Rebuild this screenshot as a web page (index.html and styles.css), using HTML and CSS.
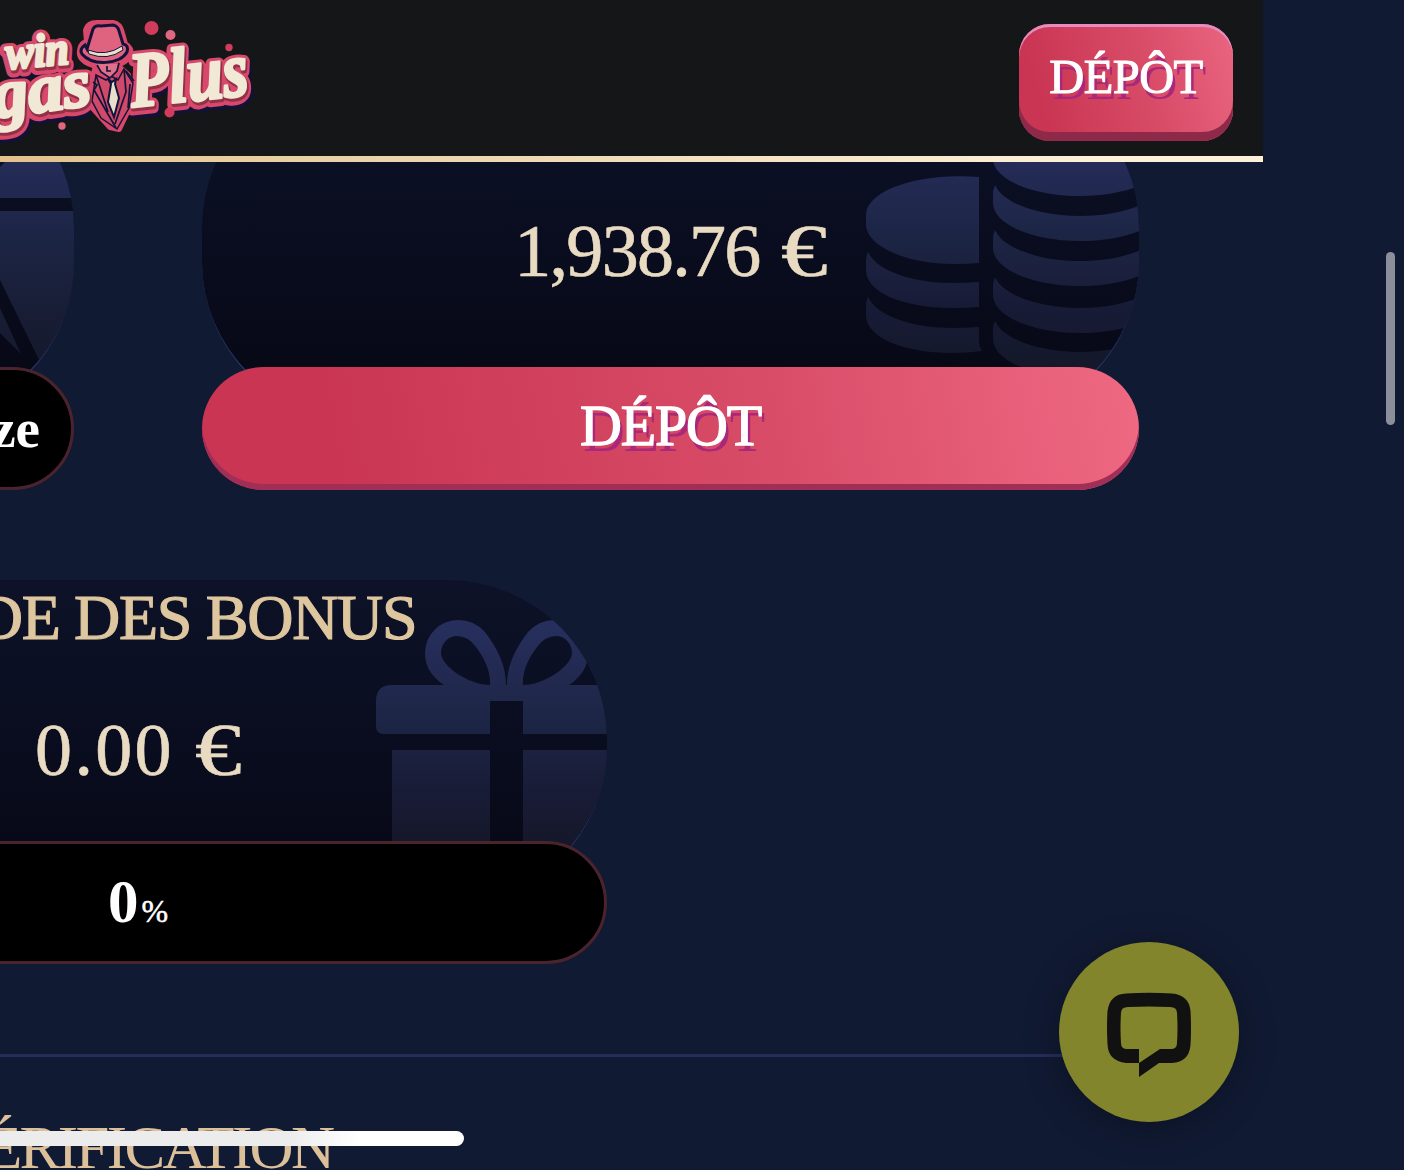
FILE: index.html
```html
<!DOCTYPE html>
<html lang="fr">
<head>
<meta charset="utf-8">
<title>Vegas Plus</title>
<link rel="stylesheet" href="styles.css">
</head>
<body>
<div class="app">
  <header class="header">
    <svg class="logo" viewBox="-70 0 330 156" role="img" aria-label="win Vegas Plus">
      <defs>
        <g id="words">
          <text x="7" y="69" font-size="46" textLength="63" lengthAdjust="spacingAndGlyphs" transform="rotate(-5 6 68)">win</text>
          <text x="-75" y="128" font-size="68" textLength="169" lengthAdjust="spacingAndGlyphs" transform="rotate(-8 -75 124)">Vegas</text>
          <text x="132" y="107" font-size="78" textLength="119" lengthAdjust="spacingAndGlyphs" transform="rotate(-6 132 108)">Plus</text>
        </g>
      </defs>
      <use href="#words" class="logo-depth" transform="translate(2 5)"/>
      <use href="#words" class="logo-outline" transform="translate(0 2)"/>
      <path class="logo-halo" d="M86 30Q88 23 97 23L113 23Q120 24 122 33L125 44Q132 48 130 55Q126 62 119 64L119 67L128 75L130 85L128 110L119 129L110 127L92 107L92 80L96 66Q78 61 80 50Q81 43 87 42Z"/>
      <path class="suit" d="M96 75L106 80L111 76L118 80L124 69L133 83L129 108L117 129L101 118L92 101Z"/>
      <path class="face" d="M96 64H119L117 71L110 78L101 72Z"/>
      <path class="lines" d="M97 65L101 72L110 78L117 71L119 63M107 66V71H111M96 75L108 112M93 82L97 85L94 90L116 128M124 69L126 92L115 124M126 71L134 81M130 84L128 108"/>
      <path class="hat" d="M87 49L93 29Q95 25 101 26L113 25Q118 26 119 31L123 44Q129 45 127 52C120 65 92 66 82 54Q79 49 85 45Z"/>
      <path class="hat-band" d="M88 50Q106 57 122 46L123 50Q108 61 89 54Z"/>
      <path class="tie" d="M108 79L112 82L116 79L115 84L119 98L114 117L108 102L111 84Z"/>
      <use href="#words" class="logo-edge" transform="translate(1 2)"/>
      <use href="#words" class="logo-fill"/>
      <g class="dots"><circle cx="151.500" cy="28" r="7"/><circle cx="229" cy="47.500" r="3.700"/><circle cx="169.500" cy="112.500" r="5"/></g>
      <g class="dots dots-light"><circle cx="170.500" cy="35" r="5"/><circle cx="62" cy="126" r="3.700"/></g>
    </svg>
    <button class="header-deposit">DÉPÔT</button>
  </header>

  <main class="main">
    <div class="cards">
      <section class="card">
        <div class="panel panel-tall">
          <svg class="art art-gem" viewBox="0 162 74 258" aria-hidden="true">
            <defs><linearGradient id="gemFill" gradientUnits="userSpaceOnUse" x1="0" y1="162" x2="0" y2="370"><stop stop-color="#242c58"/><stop offset=".4" stop-color="#1c2443"/><stop offset="1" stop-color="#15182a"/></linearGradient></defs>
            <path fill="url(#gemFill)" d="M0 167L5 162H80V198H0ZM0 211H80V380H49L0 280ZM0 308L21 354L0 333Z"/>
          </svg>
        </div>
        <div class="pill pill-level">Bronze</div>
      </section>
      <section class="card">
        <div class="panel panel-tall">
          <svg class="art art-coins" viewBox="866 162 273 258" aria-hidden="true">
            <defs>
              <linearGradient id="coinFill" gradientUnits="userSpaceOnUse" x1="0" y1="162" x2="0" y2="370"><stop stop-color="#242c58"/><stop offset=".4" stop-color="#1c2443"/><stop offset=".7" stop-color="#181b36"/><stop offset="1" stop-color="#141829"/></linearGradient>
              <path id="coin" d="M995 185C1003 203 1038 216 1080 216S1157 203 1165 185L1167 193V203C1167 224 1128 241 1080 241S993 224 993 203V195Q993 189 995 185Z"/>
              <clipPath id="stacks">
                <path d="M979 177C920 172 866 190 866 215V224C866 246 906 264 954 264Q967 264 979 263Z"/>
                <path d="M868 252C876 270 911 283 952 283Q966 283 979 282V307Q966 308 952 308C905 308 866 293 866 270V262Q866 256 868 252Z"/>
                <path d="M868 297C876 315 911 328 952 328Q966 328 979 327V342Q980 349 982 351Q966 353 952 353C905 353 866 338 866 315V307Q866 301 868 297Z"/>
                <path d="M993 150V160C995 180 1033 196 1080 196S1165 180 1167 160V150Z"/>
                <use href="#coin"/>
                <use href="#coin" transform="translate(0 45)"/>
                <use href="#coin" transform="translate(0 92)"/>
                <use href="#coin" transform="translate(0 136)"/>
              </clipPath>
            </defs>
            <rect x="860" y="150" width="310" height="260" fill="url(#coinFill)" clip-path="url(#stacks)"/>
          </svg>
          <div class="amount amount-tall">1,938.76 <span class="euro">€</span></div>
        </div>
        <button class="pill pill-deposit">DÉPÔT</button>
      </section>
    </div>

    <div class="cards">
      <section class="card">
        <div class="panel">
          <svg class="art art-gift" viewBox="376 580 231 326" aria-hidden="true">
            <defs><linearGradient id="giftFill" gradientUnits="userSpaceOnUse" x1="0" y1="620" x2="0" y2="845"><stop stop-color="#272f5e"/><stop offset=".5" stop-color="#1c2443"/><stop offset=".75" stop-color="#191c37"/><stop offset="1" stop-color="#151829"/></linearGradient></defs>
            <g fill="url(#giftFill)">
              <path fill-rule="evenodd" d="M376 701Q376 685 392 685H444C432 677 425 667 425 653A33 33 0 0 1 458 620Q474 620 485 632C498 649 506 666 506 685H507C507 666 515 649 528 632Q539 620 555 620A33 33 0 0 1 588 653C588 667 581 677 569 685H621Q637 685 637 701V728Q637 734 629 734H523V701H490V734H384Q376 734 376 726ZM490 685C491 670 483 656 476 647Q468 636 457 636A16 17 0 0 0 441 653C441 666 469 685 490 685ZM523 685C522 670 530 656 537 647Q545 636 556 636A16 17 0 0 1 572 653C572 666 544 685 523 685Z"/>
              <path d="M392 750H490V906H392ZM523 750H621V906H523Z"/>
            </g>
          </svg>
          <h2 class="card-title">SOLDE DES BONUS</h2>
          <div class="amount amount-wide">0.00 <span class="euro">€</span></div>
        </div>
        <div class="pill pill-progress"><span>0</span><small>%</small></div>
      </section>
    </div>

    <hr class="divider">
    <h2 class="section-title">VÉRIFICATION</h2>
  </main>
</div>

<button class="chat" aria-label="Chat">
  <svg viewBox="1059 942 180 180" aria-hidden="true"><path d="M1139 1077V1063L1160 1049H1171Q1177 1049 1177 1043Q1178 1028 1177 1013Q1177 1007 1170 1007Q1149 1006 1128 1007Q1121 1007 1121 1013Q1120 1028 1121 1043Q1121 1049 1127 1049H1139V1063H1126Q1108 1061 1107.500 1044Q1106.500 1028 1107.500 1011Q1110 994 1126 993.500Q1149 992 1172 993.500Q1189 995 1190.500 1011Q1191.500 1028 1190.500 1045Q1189 1062 1172 1063H1159Z"/></svg>
</button>
<div class="scrollbar"></div>
<div class="home-indicator"></div>
</body>
</html>
```
FILE: styles.css
```css
* { box-sizing: border-box; }

body {
  position: relative;
  margin: 0;
  width: 1404px;
  height: 1170px;
  overflow: hidden;
  background: #111a33;
  font-family: "Liberation Serif", serif;
}

button { border: 0; font-family: inherit; }
h2 { margin: 0; font-weight: 400; }

.app { width: 2250px; margin-left: -987px; }

.header {
  position: relative;
  z-index: 1;
  display: flex;
  justify-content: flex-end;
  align-items: flex-start;
  height: 162px;
  padding-right: 30px;
  background: #141618;
  border-bottom: 6px solid;
  border-image: linear-gradient(90deg, #e3c08c 43.900%, #e6cb9d 52%, #fdf0d8 92%) 1;
}

.logo { width: 330px; height: 156px; margin-right: 759px; }
.logo text { font-family: "Liberation Serif", serif; font-weight: 700; font-style: italic; }
.logo-depth { fill: #11113a; stroke: #11113a; stroke-width: 13px; stroke-linejoin: round; }
.logo-outline { fill: #d8486a; stroke: #d8486a; stroke-width: 13px; stroke-linejoin: round; }
.logo-edge { fill: #923047; stroke: #923047; stroke-width: 5px; stroke-linejoin: round; }
.logo-fill { fill: #f1e8d5; stroke: #f1e8d5; stroke-width: 3px; stroke-linejoin: round; }
.logo-halo { fill: #d8486a; stroke: #d8486a; stroke-width: 6px; stroke-linejoin: round; }
.suit { fill: #cf4968; stroke: #12133a; stroke-width: 1.500px; }
.face { fill: #df7089; }
.lines { fill: none; stroke: #12133a; stroke-width: 1.700px; }
.hat { fill: #df627e; stroke: #12133a; stroke-width: 3px; }
.hat-band { fill: #e7dfcb; stroke: #12133a; stroke-width: 1px; }
.tie { fill: #e7dfcb; stroke: #12133a; stroke-width: 2px; }
.dots { fill: #d13c5c; }
.dots-light { fill: #df6780; }

.header-deposit {
  width: 214px;
  height: 117px;
  margin-top: 24px;
  padding: 0 0 12px;
  border-radius: 31px;
  background: linear-gradient(75deg, #c93552 12%, #d94d69 62%, #ea6580);
  box-shadow: inset 0 3px #e58bbd, inset 0 -9px #8f294a;
  color: #fff;
  font-size: 48.500px;
  letter-spacing: -.6px;
  -webkit-text-stroke: 1px #fff;
  text-shadow: 3px 6px #a92879;
}

.main { margin: -94px 124px 0; }
.cards { display: flex; justify-content: center; gap: 128px; margin-bottom: 90px; }
.card { width: 937px; }

.panel {
  position: relative;
  height: 326px;
  overflow: hidden;
  border-bottom: 3px solid #27325f;
  border-radius: 160px;
  background: linear-gradient(#0d1228, #0a0d1f 50%, #070917 85%);
  text-align: center;
}
.panel-tall { height: 354px; }

.art { position: absolute; top: 0; right: 0; }
.art-gem { top: 94px; width: 74px; height: 258px; }
.art-coins { top: 94px; width: 273px; height: 258px; }
.art-gift { width: 231px; height: 326px; }

.card-title {
  position: relative;
  margin-bottom: 49px;
  color: #dec79f;
  font-size: 64px;
  line-height: 76px;
  letter-spacing: -1.300px;
  -webkit-text-stroke: 1.200px #dec79f;
}
.amount { color: #e9dbc2; font-size: 74px; line-height: 90px; -webkit-text-stroke: .6px #e9dbc2; }
.amount-tall { padding: 138px 10px 0 0; letter-spacing: -1.700px; }
.amount-wide { padding-right: 7px; letter-spacing: 2.300px; }
.euro { display: inline-block; transform: scaleX(1.26); transform-origin: left; }
.amount-tall .euro { margin-left: 5px; }

.pill {
  position: relative;
  display: flex;
  align-items: center;
  justify-content: center;
  width: 100%;
  height: 123px;
  margin-top: -65px;
  border-radius: 62px;
  color: #fff;
  font-size: 58px;
}
.panel-tall + .pill { margin-top: -55px; }
.pill-level, .pill-progress { border: 3px solid #4b232d; background: #000; }
.pill-level { justify-content: flex-end; padding-right: 31px; font-size: 55px; font-weight: 700; }
.pill-deposit {
  padding: 0 0 6px;
  background: linear-gradient(80deg, #c93552 14%, #d94d69 62%, #ef6983);
  box-shadow: inset 0 -6px #a02e56;
  letter-spacing: -1.200px;
  -webkit-text-stroke: 1.300px #fff;
  text-shadow: 3px 6px #a92879;
}
.pill-progress { align-items: baseline; gap: 3px; padding-top: 23px; }
.pill-progress span { font-weight: 700; font-size: 61px; }
.pill-progress small { font-size: 32px; -webkit-text-stroke: .5px #fff; }

.divider { height: 3px; margin: 0 0 52px; border: 0; background: #252e5b; }
.section-title {
  color: #dcc09a;
  font-size: 61px;
  line-height: 78px;
  letter-spacing: -2.600px;
  text-align: center;
}

.chat {
  position: absolute;
  z-index: 2;
  left: 1059px;
  top: 942px;
  width: 180px;
  height: 180px;
  padding: 0;
  border-radius: 50%;
  background: #82852c;
  box-shadow: 0 6px 36px rgba(0, 0, 0, .3);
}
.chat svg { display: block; fill: #111; }

.scrollbar {
  position: absolute;
  left: 1386px;
  top: 252px;
  width: 9px;
  height: 173px;
  border-radius: 5px;
  background: #8b8f9a;
}
.home-indicator {
  position: absolute;
  z-index: 3;
  left: -188px;
  top: 1131px;
  width: 652px;
  height: 15px;
  border-radius: 8px;
  background: linear-gradient(90deg, #ececec 73%, #fff 84%);
}
```
